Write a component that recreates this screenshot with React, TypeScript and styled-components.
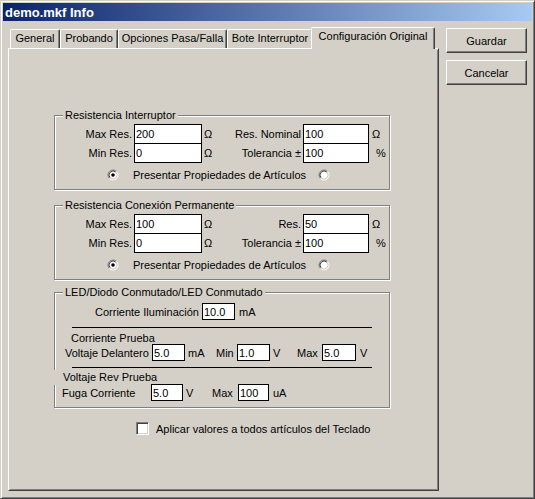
import React from 'react';
import styled, { createGlobalStyle } from 'styled-components';

const FACE = '#d4d0c8';

const GlobalStyle = createGlobalStyle`
  * { box-sizing: border-box; }
  html, body { margin: 0; padding: 0; background: ${FACE}; }
  body {
    font-family: "Liberation Sans", Arial, sans-serif;
    font-size: 11px;
    color: #000;
  }
`;

const Window = styled.div`
  width: 535px;
  height: 499px;
  display: flex;
  flex-direction: column;
  background: ${FACE};
  border: 1px solid;
  border-color: ${FACE} #404040 #404040 ${FACE};
  box-shadow: inset 1px 1px 0 #fff, inset -1px -1px 0 #808080;
  padding: 2px;
`;

const TitleBar = styled.div`
  height: 18px;
  display: flex;
  align-items: center;
  padding-left: 2px;
  background: linear-gradient(to right, #0a246a, #a6caf0);
  color: #fff;
  font-weight: bold;
  font-size: 13px;
`;

const Body = styled.div`
  flex: 1;
  display: flex;
  gap: 7px;
  padding: 6px 5px 5px 5px;
`;

const TabControl = styled.div`
  width: 431px;
  display: flex;
  flex-direction: column;
`;

const TabRow = styled.div`
  height: 21px;
  display: flex;
  align-items: flex-end;
  padding-left: 2px;
`;

const Tab = styled.div<{ $active?: boolean; $w: number }>`
  position: relative;
  width: ${(p) => p.$w + (p.$active ? 4 : 0)}px;
  height: ${(p) => (p.$active ? 22 : 19)}px;
  margin: ${(p) => (p.$active ? '0 -2px -1px -2px' : '0')};
  z-index: ${(p) => (p.$active ? 1 : 0)};
  flex-shrink: 0;
  text-align: center;
  line-height: 17px;
  white-space: nowrap;
  background: ${FACE};
  border-top: 1px solid #fff;
  border-left: 1px solid #fff;
  border-right: 1px solid #404040;
  border-radius: 2px 2px 0 0;
  box-shadow: inset -1px 0 0 #808080;
`;

const Panel = styled.div`
  flex: 1;
  border: 1px solid;
  border-color: #fff #404040 #404040 #fff;
  box-shadow: inset 1px 1px 0 ${FACE}, inset -1px -1px 0 #808080;
  padding: 66px 0 0 45px;
`;

const Group = styled.div<{ $mt: number; $pb: number }>`
  width: 336px;
  margin-top: ${(p) => p.$mt}px;
  padding-bottom: ${(p) => p.$pb}px;
  border: 1px solid #808080;
  box-shadow: inset 1px 1px 0 #fff, 1px 1px 0 #fff;
`;

const GroupTitle = styled.div`
  width: fit-content;
  margin: -7px 0 0 8px;
  padding: 0 2px;
  height: 13px;
  line-height: 13px;
  background: ${FACE};
`;

const FieldGrid = styled.div`
  display: grid;
  grid-template-columns: 79px 68px 20px 81px 66px 17px;
  grid-auto-rows: 19px;
  margin-top: 2px;
  align-items: start;
`;

const Label = styled.div`
  text-align: right;
  padding-right: 2px;
  line-height: 20px;
  white-space: nowrap;
`;

const Unit = styled.div<{ $pad?: number }>`
  padding-left: ${(p) => p.$pad ?? 2}px;
  line-height: 20px;
  white-space: nowrap;
`;

const TextBox = styled.input<{ $h?: number; $w?: number }>`
  display: block;
  width: ${(p) => (p.$w ? `${p.$w}px` : '100%')};
  height: ${(p) => p.$h ?? 20}px;
  margin: 0;
  padding: 0 1px;
  border: 1px solid #000;
  border-radius: 0;
  background: #fff;
  font-family: "Liberation Sans", Arial, sans-serif;
  font-size: 11px;
  color: #000;
  outline: none;
  flex-shrink: 0;
`;

const RadioRow = styled.div`
  display: flex;
  align-items: center;
  height: 14px;
  margin-top: 6px;
  padding-left: 52px;
`;

const RadioText = styled.span`
  width: 199px;
  padding-left: 14px;
  white-space: nowrap;
`;

const Line = styled.div<{ $mt: number; $indent: number }>`
  display: flex;
  align-items: center;
  height: 17px;
  margin-top: ${(p) => p.$mt}px;
  padding-left: ${(p) => p.$indent}px;
`;

const Cell = styled.span<{ $w?: number; $pad?: number; $right?: boolean }>`
  width: ${(p) => (p.$w ? `${p.$w}px` : 'auto')};
  flex-shrink: 0;
  padding-left: ${(p) => p.$pad ?? 0}px;
  padding-right: ${(p) => (p.$right ? 6 : 0)}px;
  text-align: ${(p) => (p.$right ? 'right' : 'left')};
  white-space: nowrap;
`;

const Separator = styled.div<{ $mt: number }>`
  width: 300px;
  height: 1px;
  margin: ${(p) => p.$mt}px 0 0 17px;
  background: #000;
`;

const Caption = styled.div`
  margin: 4px 0 0 16px;
  line-height: 13px;
`;

const RevCaption = styled.div`
  width: fit-content;
  height: 15px;
  line-height: 15px;
  margin: 2px 0 0 -2px;
  padding: 0 2px 0 10px;
  background: ${FACE};
`;

const CheckRow = styled.label`
  display: flex;
  align-items: center;
  gap: 7px;
  margin: 14px 0 0 82px;
`;

const CheckBox = styled.span`
  width: 13px;
  height: 13px;
  background: #fff;
  border: 1px solid;
  border-color: #808080 #fff #fff #808080;
  box-shadow: inset 1px 1px 0 #404040, inset -1px -1px 0 ${FACE};
`;

const ButtonColumn = styled.div`
  width: 81px;
  margin-top: 1px;
  display: flex;
  flex-direction: column;
  gap: 7px;
`;

const Button = styled.button`
  height: 25px;
  margin: 0;
  padding: 0;
  background: ${FACE};
  border: 1px solid;
  border-color: #fff #404040 #404040 #fff;
  box-shadow: inset -1px -1px 0 #808080;
  border-radius: 0;
  font-family: "Liberation Sans", Arial, sans-serif;
  font-size: 11px;
  color: #000;
`;

const Radio = ({ checked }: { checked?: boolean }) => (
  <svg width="12" height="12" viewBox="0 0 12 12" style={{ flexShrink: 0 }}>
    <circle cx="6" cy="6" r="4" fill="#fff" />
    <path d="M2.464 9.536 A5 5 0 0 1 9.536 2.464" stroke="#808080" fill="none" />
    <path d="M9.536 2.464 A5 5 0 0 1 2.464 9.536" stroke="#fff" fill="none" />
    <path d="M3.172 8.828 A4 4 0 0 1 8.828 3.172" stroke="#404040" fill="none" />
    <path d="M8.828 3.172 A4 4 0 0 1 3.172 8.828" stroke={FACE} fill="none" />
    {checked && <circle cx="6" cy="6" r="1.8" fill="#000" />}
  </svg>
);

type ResRow = { label: string; value: string; unit: string; pad?: number };

const ResistanceGroup = ({ title, mt, rows }: { title: string; mt: number; rows: [ResRow, ResRow][] }) => (
  <Group $mt={mt} $pb={7}>
    <GroupTitle>{title}</GroupTitle>
    <FieldGrid>
      {rows.map(([a, b], idx) => (
        <React.Fragment key={idx}>
          <Label>{a.label}</Label>
          <TextBox defaultValue={a.value} />
          <Unit $pad={a.pad}>{a.unit}</Unit>
          <Label>{b.label}</Label>
          <TextBox defaultValue={b.value} />
          <Unit $pad={b.pad}>{b.unit}</Unit>
        </React.Fragment>
      ))}
    </FieldGrid>
    <RadioRow>
      <Radio checked />
      <RadioText>Presentar Propiedades de Artículos</RadioText>
      <Radio />
    </RadioRow>
  </Group>
);

const tabs = [
  { name: 'General', w: 50 },
  { name: 'Probando', w: 58 },
  { name: 'Opciones Pasa/Falla', w: 109 },
  { name: 'Bote Interruptor', w: 86 },
  { name: 'Configuración Original', w: 120 },
];

const App = () => {
  return (
    <>
      <GlobalStyle />
      <Window>
        <TitleBar>demo.mkf Info</TitleBar>
        <Body>
          <TabControl>
            <TabRow>
              {tabs.map((t, idx) => (
                <Tab key={t.name} $w={t.w} $active={idx === tabs.length - 1}>
                  {t.name}
                </Tab>
              ))}
            </TabRow>
            <Panel>
              <ResistanceGroup
                title="Resistencia Interruptor"
                mt={0}
                rows={[
                  [
                    { label: 'Max Res.', value: '200', unit: 'Ω' },
                    { label: 'Res. Nominal', value: '100', unit: 'Ω', pad: 3 },
                  ],
                  [
                    { label: 'Min Res.', value: '0', unit: 'Ω' },
                    { label: 'Tolerancia ±', value: '100', unit: '%', pad: 7 },
                  ],
                ]}
              />
              <ResistanceGroup
                title="Resistencia Conexión Permanente"
                mt={15}
                rows={[
                  [
                    { label: 'Max Res.', value: '100', unit: 'Ω' },
                    { label: 'Res.', value: '50', unit: 'Ω', pad: 3 },
                  ],
                  [
                    { label: 'Min Res.', value: '0', unit: 'Ω' },
                    { label: 'Tolerancia ±', value: '100', unit: '%', pad: 7 },
                  ],
                ]}
              />
              <Group $mt={12} $pb={6}>
                <GroupTitle>LED/Diodo Conmutado/LED Conmutado</GroupTitle>
                <Line $mt={4} $indent={40}>
                  <Cell $w={107} $right>Corriente Iluminación</Cell>
                  <TextBox $w={33} $h={17} defaultValue="10.0" />
                  <Cell $pad={4}>mA</Cell>
                </Line>
                <Separator $mt={7} />
                <Caption>Corriente Prueba</Caption>
                <Line $mt={-1} $indent={10}>
                  <Cell $w={87}>Voltaje Delantero</Cell>
                  <TextBox $w={33} $h={17} defaultValue="5.0" />
                  <Cell $w={31} $pad={3}>mA</Cell>
                  <Cell $w={21}>Min</Cell>
                  <TextBox $w={33} $h={17} defaultValue="1.0" />
                  <Cell $w={27} $pad={3}>V</Cell>
                  <Cell $w={25}>Max</Cell>
                  <TextBox $w={34} $h={17} defaultValue="5.0" />
                  <Cell $pad={4}>V</Cell>
                </Line>
                <Separator $mt={6} />
                <RevCaption>Voltaje Rev Prueba</RevCaption>
                <Line $mt={-1} $indent={7}>
                  <Cell $w={89}>Fuga Corriente</Cell>
                  <TextBox $w={32} $h={17} defaultValue="5.0" />
                  <Cell $w={29} $pad={3}>V</Cell>
                  <Cell $w={26}>Max</Cell>
                  <TextBox $w={31} $h={17} defaultValue="100" />
                  <Cell $pad={4}>uA</Cell>
                </Line>
              </Group>
              <CheckRow>
                <CheckBox />
                <span>Aplicar valores a todos artículos del Teclado</span>
              </CheckRow>
            </Panel>
          </TabControl>
          <ButtonColumn>
            <Button>Guardar</Button>
            <Button>Cancelar</Button>
          </ButtonColumn>
        </Body>
      </Window>
    </>
  );
};

export default App;
